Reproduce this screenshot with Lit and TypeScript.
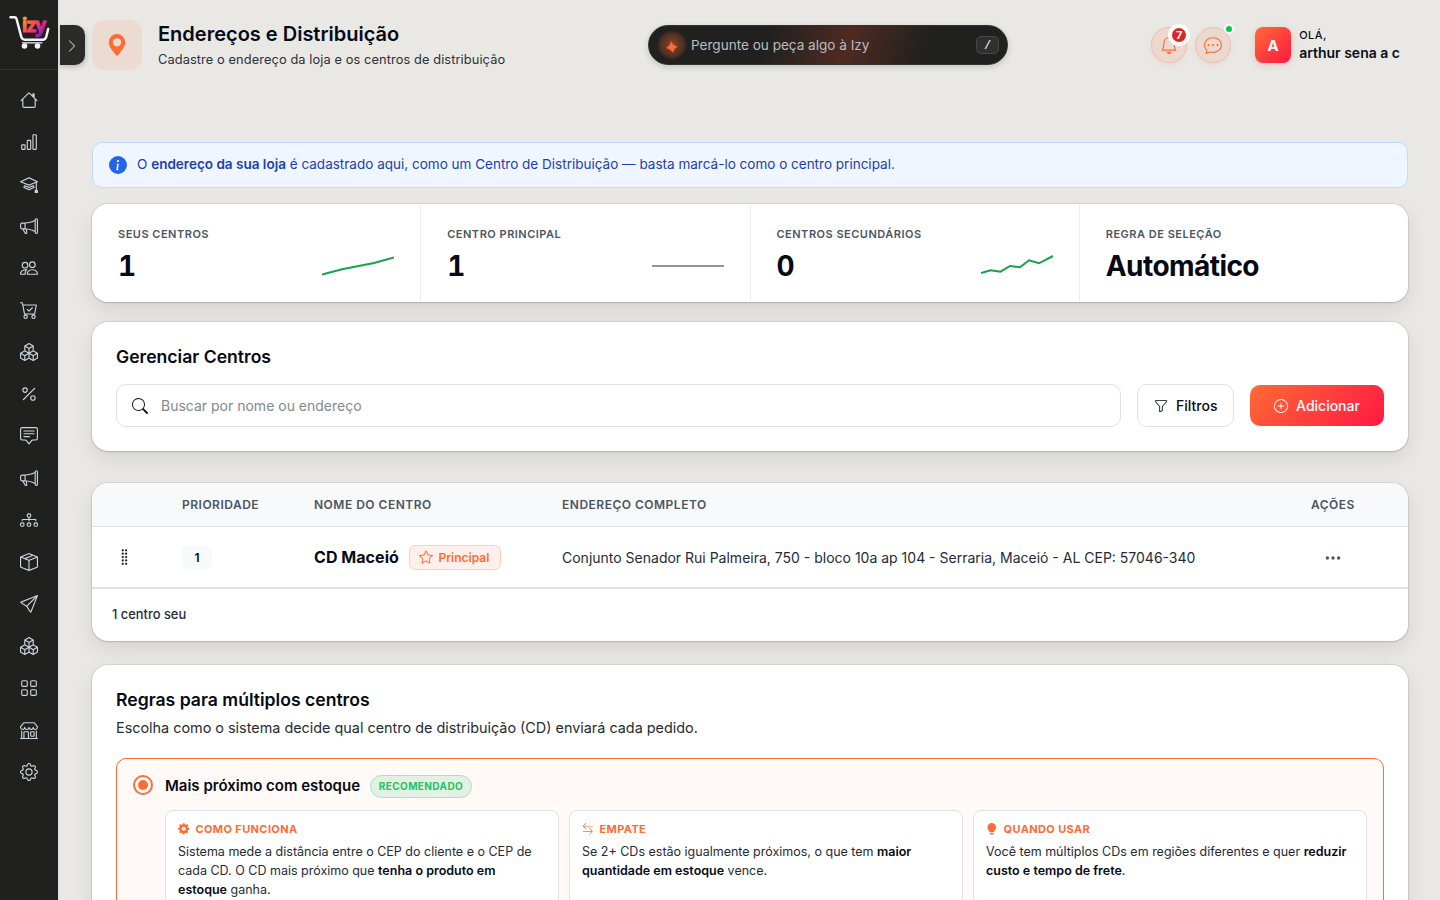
import { LitElement, html, svg, css } from "lit";
import { customElement, property } from "lit/decorators.js";

const ICONS: Record<string, string[]> = {
  house: ["M8.707 1.5a1 1 0 0 0-1.414 0L.646 8.146a.5.5 0 0 0 .708.708L2 8.207V13.5A1.5 1.5 0 0 0 3.5 15h9a1.5 1.5 0 0 0 1.5-1.5V8.207l.646.647a.5.5 0 0 0 .708-.708L13 5.793V2.5a.5.5 0 0 0-.5-.5h-1a.5.5 0 0 0-.5.5v1.293zM13 7.207V13.5a.5.5 0 0 1-.5.5h-9a.5.5 0 0 1-.5-.5V7.207l5-5z"],
  bars: ["M4 11H2v3h2zm5-4H7v7h2zm5-5v12h-2V2zm-2-1a1 1 0 0 0-1 1v12a1 1 0 0 0 1 1h2a1 1 0 0 0 1-1V2a1 1 0 0 0-1-1zM6 7a1 1 0 0 1 1-1h2a1 1 0 0 1 1 1v7a1 1 0 0 1-1 1H7a1 1 0 0 1-1-1zm-5 4a1 1 0 0 1 1-1h2a1 1 0 0 1 1 1v3a1 1 0 0 1-1 1H2a1 1 0 0 1-1-1z"],
  mortarboard: [
    "M8.211 2.047a.5.5 0 0 0-.422 0l-7.5 3.5a.5.5 0 0 0 .025.917l7.5 3a.5.5 0 0 0 .372 0L14 7.14V13a1 1 0 0 0-1 1v2h3v-2a1 1 0 0 0-1-1V6.739l.686-.275a.5.5 0 0 0 .025-.917zM8 8.46 1.758 5.965 8 3.052l6.242 2.913z",
    "M4.176 9.032a.5.5 0 0 0-.656.327l-.5 1.7a.5.5 0 0 0 .294.605l4.5 1.8a.5.5 0 0 0 .372 0l4.5-1.8a.5.5 0 0 0 .294-.605l-.5-1.7a.5.5 0 0 0-.656-.327L8 10.466zm-.068 1.873.22-.748 3.496 1.311a.5.5 0 0 0 .352 0l3.496-1.311.22.748L8 12.46z",
  ],
  megaphone: ["M13 2.5a1.5 1.5 0 0 1 3 0v11a1.5 1.5 0 0 1-3 0v-.214c-2.162-1.241-4.49-1.843-6.912-2.083l.405 2.712A1 1 0 0 1 5.51 15.1h-.548a1 1 0 0 1-.916-.599l-1.85-3.49-.202-.003A2.014 2.014 0 0 1 0 9V7a2.02 2.02 0 0 1 1.992-2.013 75 75 0 0 0 2.483-.075c3.043-.154 6.148-.849 8.525-2.199zm1 0v11a.5.5 0 0 0 1 0v-11a.5.5 0 0 0-1 0m-1 1.35c-2.344 1.205-5.209 1.842-8 2.033v4.233q.27.015.537.036c2.568.189 5.093.744 7.463 1.993zm-9 6.215v-4.13a95 95 0 0 1-1.992.052A1.02 1.02 0 0 0 1 7v2c0 .55.448 1.002 1.006 1.009A61 61 0 0 1 4 10.065m-.657.975 1.609 3.037.01.024h.548l-.002-.014-.443-2.966a68 68 0 0 0-1.722-.082z"],
  people: ["M15 14s1 0 1-1-1-4-5-4-5 3-5 4 1 1 1 1zm-7.978-1L7 12.996c.001-.264.167-1.03.76-1.72C8.312 10.629 9.282 10 11 10c1.717 0 2.687.63 3.24 1.276.593.69.758 1.457.76 1.72l-.008.002-.014.002zM11 7a2 2 0 1 0 0-4 2 2 0 0 0 0 4m3-2a3 3 0 1 1-6 0 3 3 0 0 1 6 0M6.936 9.28a6 6 0 0 0-1.23-.247A7 7 0 0 0 5 9c-4 0-5 3-5 4q0 1 1 1h4.216A2.24 2.24 0 0 1 5 13c0-1.01.377-2.042 1.09-2.904.243-.294.526-.569.846-.816M4.92 10A5.5 5.5 0 0 0 4 13H1c0-.26.164-1.03.76-1.724.545-.636 1.492-1.256 3.16-1.275ZM1.5 5.5a3 3 0 1 1 6 0 3 3 0 0 1-6 0m3-2a2 2 0 1 0 0 4 2 2 0 0 0 0-4"],
  cart: [
    "M11.354 6.354a.5.5 0 0 0-.708-.708L8 8.293 6.854 7.146a.5.5 0 1 0-.708.708l1.5 1.5a.5.5 0 0 0 .708 0z",
    "M.5 1a.5.5 0 0 0 0 1h1.11l.401 1.607 1.498 7.985A.5.5 0 0 0 4 12h1a2 2 0 1 0 0 4 2 2 0 0 0 0-4h7a2 2 0 1 0 0 4 2 2 0 0 0 0-4h1a.5.5 0 0 0 .491-.408l1.5-8A.5.5 0 0 0 14.5 3H2.89l-.405-1.621A.5.5 0 0 0 2 1zm3.915 10L3.102 4h10.796l-1.313 7zM6 14a1 1 0 1 1-2 0 1 1 0 0 1 2 0m7 0a1 1 0 1 1-2 0 1 1 0 0 1 2 0",
  ],
  boxes: ["M7.752.066a.5.5 0 0 1 .496 0l3.75 2.143a.5.5 0 0 1 .252.434v3.995l3.498 2A.5.5 0 0 1 16 9.07v4.286a.5.5 0 0 1-.252.434l-3.75 2.143a.5.5 0 0 1-.496 0l-3.502-2-3.502 2.001a.5.5 0 0 1-.496 0l-3.75-2.143A.5.5 0 0 1 0 13.357V9.071a.5.5 0 0 1 .252-.434L3.75 6.638V2.643a.5.5 0 0 1 .252-.434zM4.25 7.504 1.508 9.071l2.742 1.567 2.742-1.567zM7.5 9.933l-2.75 1.571v3.134l2.75-1.571zm1 3.134 2.75 1.571v-3.134L8.5 9.933zm.508-3.996 2.742 1.567 2.742-1.567-2.742-1.567zm2.242-2.433V3.504L8.5 5.076V8.21zM7.5 8.21V5.076L4.75 3.504v3.134zM5.258 2.643 8 4.21l2.742-1.567L8 1.076zM15 9.933l-2.75 1.571v3.134L15 13.067zM3.75 14.638v-3.134L1 9.933v3.134z"],
  percent: ["M13.442 2.558a.625.625 0 0 1 0 .884l-10 10a.625.625 0 1 1-.884-.884l10-10a.625.625 0 0 1 .884 0M4.5 6a1.5 1.5 0 1 1 0-3 1.5 1.5 0 0 1 0 3m0 1a2.5 2.5 0 1 0 0-5 2.5 2.5 0 0 0 0 5m7 6a1.5 1.5 0 1 1 0-3 1.5 1.5 0 0 1 0 3m0 1a2.5 2.5 0 1 0 0-5 2.5 2.5 0 0 0 0 5"],
  chatText: [
    "M14 1a1 1 0 0 1 1 1v8a1 1 0 0 1-1 1h-2.5a2 2 0 0 0-1.6.8L8 14.333 6.1 11.8a2 2 0 0 0-1.6-.8H2a1 1 0 0 1-1-1V2a1 1 0 0 1 1-1zM2 0a2 2 0 0 0-2 2v8a2 2 0 0 0 2 2h2.5a1 1 0 0 1 .8.4l1.9 2.533a1 1 0 0 0 1.6 0l1.9-2.533a1 1 0 0 1 .8-.4H14a2 2 0 0 0 2-2V2a2 2 0 0 0-2-2z",
    "M3 3.5a.5.5 0 0 1 .5-.5h9a.5.5 0 0 1 0 1h-9a.5.5 0 0 1-.5-.5M3 6a.5.5 0 0 1 .5-.5h9a.5.5 0 0 1 0 1h-9A.5.5 0 0 1 3 6m0 2.5a.5.5 0 0 1 .5-.5h5a.5.5 0 0 1 0 1h-5a.5.5 0 0 1-.5-.5",
  ],
  diagram: ["M6 3.5A1.5 1.5 0 0 1 7.5 2h1A1.5 1.5 0 0 1 10 3.5v1A1.5 1.5 0 0 1 8.5 6v1H14a.5.5 0 0 1 .5.5v1a.5.5 0 0 1-1 0V8h-5v.5a.5.5 0 0 1-1 0V8h-5v.5a.5.5 0 0 1-1 0v-1A.5.5 0 0 1 2 7h5.5V6A1.5 1.5 0 0 1 6 4.5zM8.5 5a.5.5 0 0 0 .5-.5v-1a.5.5 0 0 0-.5-.5h-1a.5.5 0 0 0-.5.5v1a.5.5 0 0 0 .5.5zM0 11.5A1.5 1.5 0 0 1 1.5 10h1A1.5 1.5 0 0 1 4 11.5v1A1.5 1.5 0 0 1 2.5 14h-1A1.5 1.5 0 0 1 0 12.5zm1.5-.5a.5.5 0 0 0-.5.5v1a.5.5 0 0 0 .5.5h1a.5.5 0 0 0 .5-.5v-1a.5.5 0 0 0-.5-.5zm4.5.5A1.5 1.5 0 0 1 7.5 10h1a1.5 1.5 0 0 1 1.5 1.5v1A1.5 1.5 0 0 1 8.5 14h-1A1.5 1.5 0 0 1 6 12.5zm1.5-.5a.5.5 0 0 0-.5.5v1a.5.5 0 0 0 .5.5h1a.5.5 0 0 0 .5-.5v-1a.5.5 0 0 0-.5-.5zm4.5.5a1.5 1.5 0 0 1 1.5-1.5h1a1.5 1.5 0 0 1 1.5 1.5v1a1.5 1.5 0 0 1-1.5 1.5h-1a1.5 1.5 0 0 1-1.5-1.5zm1.5-.5a.5.5 0 0 0-.5.5v1a.5.5 0 0 0 .5.5h1a.5.5 0 0 0 .5-.5v-1a.5.5 0 0 0-.5-.5z"],
  box: ["M8.186 1.113a.5.5 0 0 0-.372 0L1.846 3.5l2.404.961L10.404 2zm3.564 1.426L5.596 5 8 5.961 14.154 3.5zm3.25 1.7-6.5 2.6v7.922l6.5-2.6V4.24zM7.5 14.762V6.838L1 4.239v7.923zM7.443.184a1.5 1.5 0 0 1 1.114 0l7.129 2.852A.5.5 0 0 1 16 3.5v8.662a1 1 0 0 1-.629.928l-7.185 2.874a.5.5 0 0 1-.372 0L.63 13.09a1 1 0 0 1-.63-.928V3.5a.5.5 0 0 1 .314-.464z"],
  send: ["M15.854.146a.5.5 0 0 1 .11.54l-5.819 14.547a.75.75 0 0 1-1.329.124l-3.178-4.995L.643 7.184a.75.75 0 0 1 .124-1.33L15.314.037a.5.5 0 0 1 .54.11ZM6.636 10.07l2.761 4.338L14.13 2.576zm6.787-8.201L1.591 6.602l4.339 2.76z"],
  grid: ["M1 2.5A1.5 1.5 0 0 1 2.5 1h3A1.5 1.5 0 0 1 7 2.5v3A1.5 1.5 0 0 1 5.5 7h-3A1.5 1.5 0 0 1 1 5.5zM2.5 2a.5.5 0 0 0-.5.5v3a.5.5 0 0 0 .5.5h3a.5.5 0 0 0 .5-.5v-3a.5.5 0 0 0-.5-.5zm6.5.5A1.5 1.5 0 0 1 10.5 1h3A1.5 1.5 0 0 1 15 2.5v3A1.5 1.5 0 0 1 13.5 7h-3A1.5 1.5 0 0 1 9 5.5zm1.5-.5a.5.5 0 0 0-.5.5v3a.5.5 0 0 0 .5.5h3a.5.5 0 0 0 .5-.5v-3a.5.5 0 0 0-.5-.5zM1 10.5A1.5 1.5 0 0 1 2.5 9h3A1.5 1.5 0 0 1 7 10.5v3A1.5 1.5 0 0 1 5.5 15h-3A1.5 1.5 0 0 1 1 13.5zm1.5-.5a.5.5 0 0 0-.5.5v3a.5.5 0 0 0 .5.5h3a.5.5 0 0 0 .5-.5v-3a.5.5 0 0 0-.5-.5zm6.5.5A1.5 1.5 0 0 1 10.5 9h3a1.5 1.5 0 0 1 1.5 1.5v3a1.5 1.5 0 0 1-1.5 1.5h-3A1.5 1.5 0 0 1 9 13.5zm1.5-.5a.5.5 0 0 0-.5.5v3a.5.5 0 0 0 .5.5h3a.5.5 0 0 0 .5-.5v-3a.5.5 0 0 0-.5-.5z"],
  shop: ["M2.97 1.35A1 1 0 0 1 3.73 1h8.54a1 1 0 0 1 .76.35l2.609 3.044A1.5 1.5 0 0 1 16 5.37v.255a2.375 2.375 0 0 1-4.25 1.458A2.37 2.37 0 0 1 9.875 8 2.37 2.37 0 0 1 8 7.083 2.37 2.37 0 0 1 6.125 8a2.37 2.37 0 0 1-1.875-.917A2.375 2.375 0 0 1 0 5.625V5.37a1.5 1.5 0 0 1 .361-.976zm1.78 4.275a1.375 1.375 0 0 0 2.75 0 .5.5 0 0 1 1 0 1.375 1.375 0 0 0 2.75 0 .5.5 0 0 1 1 0 1.375 1.375 0 1 0 2.75 0V5.37a.5.5 0 0 0-.12-.325L12.27 2H3.73L1.12 5.045A.5.5 0 0 0 1 5.37v.255a1.375 1.375 0 0 0 2.75 0 .5.5 0 0 1 1 0M1.5 8.5A.5.5 0 0 1 2 9v6h1v-5a1 1 0 0 1 1-1h3a1 1 0 0 1 1 1v5h6V9a.5.5 0 0 1 1 0v6h.5a.5.5 0 0 1 0 1H.5a.5.5 0 0 1 0-1H1V9a.5.5 0 0 1 .5-.5M4 15h3v-5H4zm5-5a1 1 0 0 1 1-1h2a1 1 0 0 1 1 1v3a1 1 0 0 1-1 1h-2a1 1 0 0 1-1-1zm3 0h-2v3h2z"],
  gear: [
    "M8 4.754a3.246 3.246 0 1 0 0 6.492 3.246 3.246 0 0 0 0-6.492M5.754 8a2.246 2.246 0 1 1 4.492 0 2.246 2.246 0 0 1-4.492 0",
    "M9.796 1.343c-.527-1.79-3.065-1.79-3.592 0l-.094.319a.873.873 0 0 1-1.255.52l-.292-.16c-1.64-.892-3.433.902-2.54 2.541l.159.292a.873.873 0 0 1-.52 1.255l-.319.094c-1.79.527-1.79 3.065 0 3.592l.319.094a.873.873 0 0 1 .52 1.255l-.16.292c-.892 1.64.901 3.434 2.541 2.54l.292-.159a.873.873 0 0 1 1.255.52l.094.319c.527 1.79 3.065 1.79 3.592 0l.094-.319a.873.873 0 0 1 1.255-.52l.292.16c1.64.893 3.434-.902 2.54-2.541l-.159-.292a.873.873 0 0 1 .52-1.255l.319-.094c1.79-.527 1.79-3.065 0-3.592l-.319-.094a.873.873 0 0 1-.52-1.255l.16-.292c.893-1.64-.902-3.433-2.541-2.54l-.292.159a.873.873 0 0 1-1.255-.52zm-2.633.283c.246-.835 1.428-.835 1.674 0l.094.319a1.873 1.873 0 0 0 2.693 1.115l.291-.16c.764-.415 1.6.42 1.184 1.185l-.159.292a1.873 1.873 0 0 0 1.116 2.692l.318.094c.835.246.835 1.428 0 1.674l-.319.094a1.873 1.873 0 0 0-1.115 2.693l.16.291c.415.764-.42 1.6-1.185 1.184l-.291-.159a1.873 1.873 0 0 0-2.693 1.116l-.094.318c-.246.835-1.428.835-1.674 0l-.094-.319a1.873 1.873 0 0 0-2.692-1.115l-.292.16c-.764.415-1.6-.42-1.184-1.185l.159-.291A1.873 1.873 0 0 0 1.945 8.93l-.319-.094c-.835-.246-.835-1.428 0-1.674l.319-.094A1.873 1.873 0 0 0 3.06 4.377l-.16-.292c-.415-.764.42-1.6 1.185-1.184l.292.159a1.873 1.873 0 0 0 2.692-1.115z",
  ],
  gearFill: ["M9.405 1.05c-.413-1.4-2.397-1.4-2.81 0l-.1.34a1.464 1.464 0 0 1-2.105.872l-.31-.17c-1.283-.698-2.686.705-1.987 1.987l.169.311c.446.82.023 1.841-.872 2.105l-.34.1c-1.4.413-1.4 2.397 0 2.81l.34.1a1.464 1.464 0 0 1 .872 2.105l-.17.31c-.698 1.283.705 2.686 1.987 1.987l.311-.169a1.464 1.464 0 0 1 2.105.872l.1.34c.413 1.4 2.397 1.4 2.81 0l.1-.34a1.464 1.464 0 0 1 2.105-.872l.31.17c1.283.698 2.686-.705 1.987-1.987l-.169-.311a1.464 1.464 0 0 1 .872-2.105l.34-.1c1.4-.413 1.4-2.397 0-2.81l-.34-.1a1.464 1.464 0 0 1-.872-2.105l.17-.31c.698-1.283-.705-2.686-1.987-1.987l-.311.169a1.464 1.464 0 0 1-2.105-.872zM8 10.93a2.929 2.929 0 1 1 0-5.86 2.929 2.929 0 0 1 0 5.858z"],
  bell: ["M8 16a2 2 0 0 0 2-2H6a2 2 0 0 0 2 2M8 1.918l-.797.161A4 4 0 0 0 4 6c0 .628-.134 2.197-.459 3.742-.16.767-.376 1.566-.663 2.258h10.244c-.287-.692-.502-1.49-.663-2.258C12.134 8.197 12 6.628 12 6a4 4 0 0 0-3.203-3.92zM14.22 12c.223.447.481.801.78 1H1c.299-.199.557-.553.78-1C2.68 10.2 3 6.88 3 6c0-2.42 1.72-4.44 4.005-4.901a1 1 0 1 1 1.99 0A5 5 0 0 1 13 6c0 .88.32 4.2 1.22 6"],
  chatDots: [
    "M5 8a1 1 0 1 1-2 0 1 1 0 0 1 2 0m4 0a1 1 0 1 1-2 0 1 1 0 0 1 2 0m3 1a1 1 0 1 0 0-2 1 1 0 0 0 0 2",
    "m2.165 15.803.02-.004c1.83-.363 2.948-.842 3.468-1.105A9 9 0 0 0 8 15c4.418 0 8-3.134 8-7s-3.582-7-8-7-8 3.134-8 7c0 1.76.743 3.37 1.97 4.6a10.4 10.4 0 0 1-.524 2.318l-.003.011a11 11 0 0 1-.244.637c-.079.186.074.394.273.362a22 22 0 0 0 .693-.125m.8-3.108a1 1 0 0 0-.287-.801C1.618 10.83 1 9.468 1 8c0-3.192 3.004-6 7-6s7 2.808 7 6-3.004 6-7 6a8 8 0 0 1-2.088-.272 1 1 0 0 0-.711.074c-.387.196-1.24.57-2.634.893a11 11 0 0 0 .398-2",
  ],
  chevron: ["M4.646 1.646a.5.5 0 0 1 .708 0l6 6a.5.5 0 0 1 0 .708l-6 6a.5.5 0 0 1-.708-.708L10.293 8 4.646 2.354a.5.5 0 0 1 0-.708"],
  pin: ["M8 16s6-5.686 6-10A6 6 0 0 0 2 6c0 4.314 6 10 6 10m0-7a3 3 0 1 1 0-6 3 3 0 0 1 0 6"],
  search: ["M11.742 10.344a6.5 6.5 0 1 0-1.397 1.398h-.001q.044.06.098.115l3.85 3.85a1 1 0 0 0 1.415-1.414l-3.85-3.85a1 1 0 0 0-.115-.1zM12 6.5a5.5 5.5 0 1 1-11 0 5.5 5.5 0 0 1 11 0"],
  funnel: ["M1.5 1.5A.5.5 0 0 1 2 1h12a.5.5 0 0 1 .5.5v2a.5.5 0 0 1-.128.334L10 8.692V13.5a.5.5 0 0 1-.342.474l-3 1A.5.5 0 0 1 6 14.5V8.692L1.628 3.834A.5.5 0 0 1 1.5 3.5zm1 .5v1.308l4.372 4.858A.5.5 0 0 1 7 8.5v5.306l2-.666V8.5a.5.5 0 0 1 .128-.334L13.5 3.308V2z"],
  plus: [
    "M8 15A7 7 0 1 1 8 1a7 7 0 0 1 0 14m0 1A8 8 0 1 0 8 0a8 8 0 0 0 0 16",
    "M8 4a.5.5 0 0 1 .5.5v3h3a.5.5 0 0 1 0 1h-3v3a.5.5 0 0 1-1 0v-3h-3a.5.5 0 0 1 0-1h3v-3A.5.5 0 0 1 8 4",
  ],
  star: ["M2.866 14.85c-.078.444.36.791.746.593l4.39-2.256 4.389 2.256c.386.198.824-.149.746-.592l-.83-4.73 3.522-3.356c.33-.314.16-.888-.282-.95l-4.898-.696L8.465.792a.513.513 0 0 0-.927 0L5.354 5.12l-4.898.696c-.441.062-.612.636-.283.95l3.523 3.356-.83 4.73zm4.905-2.767-3.686 1.894.694-3.957a.56.56 0 0 0-.163-.505L1.71 6.745l4.052-.576a.53.53 0 0 0 .393-.288L8 2.223l1.847 3.658a.53.53 0 0 0 .393.288l4.052.575-2.906 2.77a.56.56 0 0 0-.163.506l.694 3.957-3.686-1.894a.5.5 0 0 0-.461 0z"],
  dots: ["M3 9.5a1.5 1.5 0 1 1 0-3 1.5 1.5 0 0 1 0 3m5 0a1.5 1.5 0 1 1 0-3 1.5 1.5 0 0 1 0 3m5 0a1.5 1.5 0 1 1 0-3 1.5 1.5 0 0 1 0 3"],
  grip: ["M7 2a1 1 0 1 1-2 0 1 1 0 0 1 2 0m3 0a1 1 0 1 1-2 0 1 1 0 0 1 2 0M7 5a1 1 0 1 1-2 0 1 1 0 0 1 2 0m3 0a1 1 0 1 1-2 0 1 1 0 0 1 2 0M7 8a1 1 0 1 1-2 0 1 1 0 0 1 2 0m3 0a1 1 0 1 1-2 0 1 1 0 0 1 2 0m-3 3a1 1 0 1 1-2 0 1 1 0 0 1 2 0m3 0a1 1 0 1 1-2 0 1 1 0 0 1 2 0m-3 3a1 1 0 1 1-2 0 1 1 0 0 1 2 0m3 0a1 1 0 1 1-2 0 1 1 0 0 1 2 0"],
  info: ["M8 16A8 8 0 1 0 8 0a8 8 0 0 0 0 16m.93-9.412-1 4.705c-.07.34.029.533.304.533.194 0 .487-.07.686-.246l-.088.416c-.287.346-.92.598-1.465.598-.703 0-1.002-.422-.808-1.319l.738-3.468c.064-.293.006-.399-.287-.47l-.451-.081.082-.381 2.29-.287zM8 5.5a1 1 0 1 1 0-2 1 1 0 0 1 0 2"],
  swap: ["M1 11.5a.5.5 0 0 0 .5.5h11.793l-3.147 3.146a.5.5 0 0 0 .708.708l4-4a.5.5 0 0 0 0-.708l-4-4a.5.5 0 0 0-.708.708L13.293 11H1.5a.5.5 0 0 0-.5.5m14-7a.5.5 0 0 1-.5.5H2.707l3.147 3.146a.5.5 0 1 1-.708.708l-4-4a.5.5 0 0 1 0-.708l4-4a.5.5 0 1 1 .708.708L2.707 4H14.5a.5.5 0 0 1 .5.5"],
  bulb: ["M2 6a6 6 0 1 1 10.174 4.31c-.203.196-.359.4-.453.619l-.762 1.769A.5.5 0 0 1 10.5 13h-5a.5.5 0 0 1-.46-.302l-.761-1.77a2 2 0 0 0-.453-.618A5.98 5.98 0 0 1 2 6m3 8.5a.5.5 0 0 1 .5-.5h5a.5.5 0 0 1 0 1l-.224.447a1 1 0 0 1-.894.553H6.618a1 1 0 0 1-.894-.553L5.5 15a.5.5 0 0 1-.5-.5"],
};

@customElement("izy-icon")
class IzyIcon extends LitElement {
  @property() name = "";
  static styles = css`
    :host { display: block; flex: none; width: 16px; height: 16px; }
    .glyph { display: block; width: 100%; height: 100%; fill: currentColor; }
  `;
  render() {
    return html`<svg class="glyph" viewBox="0 0 16 16">${(ICONS[this.name] ?? []).map((d) => svg`<path d=${d}></path>`)}</svg>`;
  }
}

@customElement("izy-sidebar")
class IzySidebar extends LitElement {
  static styles = css`
    :host { display: flex; flex-direction: column; flex: none; box-sizing: border-box; width: 60px; height: 900px;
      background: #20201e; border-right: 2px solid #dee2e6; }
    .brand { height: 69px; box-sizing: content-box; border-bottom: 1px solid #333331; }
    .logo { display: block; width: 58px; height: 69px; }
    .word { font: 700 19.5px "Open Sans", sans-serif; letter-spacing: -1px; }
    .nav { display: flex; flex-direction: column; align-items: center; gap: 24px; padding-top: 21px; color: #cbd5e1; }
    .item { width: 18px; height: 18px; }
  `;
  render() {
    const items = ["house", "bars", "mortarboard", "megaphone", "people", "cart", "boxes", "percent", "chatText",
      "megaphone", "diagram", "box", "send", "boxes", "grid", "shop", "gear"];
    return html`
      <div class="brand">
        <svg class="logo" viewBox="0 0 58 69">
          <defs>
            <linearGradient id="w" gradientUnits="userSpaceOnUse" x1="24" y1="19" x2="43" y2="37">
              <stop offset="0" stop-color="#ffa01f"></stop><stop offset=".3" stop-color="#ff5a3c"></stop>
              <stop offset=".6" stop-color="#ee2a88"></stop><stop offset=".95" stop-color="#6a1be0"></stop>
            </linearGradient>
          </defs>
          <path d="M10.5 17.2H14.5Q16 17.2 16.5 18.8L21.2 36.5Q22 39.7 24.8 39.7H42.5Q45.5 39.7 46.2 37L48.2 29" fill="none" stroke="#f3f4fa" stroke-width="2.5" stroke-linecap="round" stroke-linejoin="round"></path>
          <path d="M22.5 42.8H42" fill="none" stroke="#f3f4fa" stroke-width="1.2" stroke-linecap="round"></path>
          <circle cx="24.5" cy="46" r="2.8" fill="#f3f4fa"></circle><circle cx="37.5" cy="46" r="2.8" fill="#f3f4fa"></circle>
          <text class="word" x="21.8" y="32.2" fill="url(#w)" stroke="url(#w)" stroke-width=".8">izy</text>
        </svg>
      </div>
      <div class="nav">${items.map((n) => html`<izy-icon class="item" name=${n}></izy-icon>`)}</div>`;
  }
}

@customElement("izy-header")
class IzyHeader extends LitElement {
  static styles = css`
    :host { display: grid; grid-template-columns: 556px 360px 1fr; align-items: center; height: 50px; }
    .lead { display: flex; align-items: center; gap: 16px; }
    .tile { display: grid; place-items: center; width: 50px; height: 50px; border-radius: 12px; background: #ecdbd1; color: #ff6b35; }
    .tile-icon { width: 22px; height: 22px; }
    .title { font-size: 20px; font-weight: 600; line-height: 24px; color: #060a14; white-space: nowrap; margin-top: 2px; }
    .sub { font-size: 12.8px; line-height: 20px; color: #2b303b; margin: 4px 0 0; white-space: nowrap; letter-spacing: .1px; }
    .ask { display: flex; align-items: center; box-sizing: border-box; width: 360px; height: 40px; border-radius: 20px; padding: 0 8px;
      border: 1px solid #2c352f;
      background: linear-gradient(110deg, #20201e 33%, #4f2b21 55%, #20201e 77%); box-shadow: 0 2px 6px rgba(0,0,0,.16); }
    .glow { display: grid; place-items: center; width: 30px; height: 30px; border-radius: 50%;
      background: radial-gradient(circle, rgba(255,107,53,.5) 0%, rgba(255,107,53,.2) 55%, transparent 72%); }
    .spark { width: 12px; height: 12px; fill: #ff6b35; margin: 4px 1px 0 0; }
    .hint { flex: 1; margin-left: 4px; font-size: 13.55px; color: #b9bdc4; margin-top: -1px; }
    .key { display: grid; place-items: center; box-sizing: border-box; width: 23px; height: 18px; border-radius: 5px; background: #30302f; border: 1px solid #484846;
      color: #d8dbe0; font: 700 12px/16px "Liberation Mono", monospace; padding-top: 1px; }
    .tools { display: flex; justify-content: flex-end; align-items: center; padding-right: 8px; }
    .round { position: relative; display: grid; place-items: center; box-sizing: border-box; width: 36px; height: 36px; border-radius: 50%; color: #ff6b35;
      background: #ebd9cf; border: 1px solid #f0bfaa; margin-right: 8px; box-shadow: 0 2px 5px rgba(255,107,53,.12); }
    .round-icon { width: 18px; height: 18px; }
    .count { position: absolute; left: 16px; top: -4px; width: 14px; height: 14px; border: 4px solid #fff; border-radius: 50%;
      background: #dc2626; color: #fff; font-size: 11px; line-height: 14px; font-weight: 700; text-align: center; }
    .dot { position: absolute; left: 28px; top: -4px; width: 6px; height: 6px; border: 2px solid #fff; border-radius: 50%; background: #00c853; }
    .avatar { display: grid; place-items: center; width: 36px; height: 36px; border-radius: 8px; margin: 0 8px 0 16px; color: #fff; font-size: 15px; font-weight: 700;
      background: linear-gradient(135deg, #ff6b35, #ff1744); box-shadow: 0 2px 6px rgba(255,80,60,.25); }
    .hello { font-size: 11px; font-weight: 500; line-height: 14px; color: #0a0e18; letter-spacing: .5px; }
    .who { font-size: 14px; font-weight: 600; line-height: 20px; color: #0a0e18; white-space: nowrap; margin: 1px 0 -1px; }
  `;
  render() {
    return html`
      <div class="lead">
        <div class="tile"><izy-icon class="tile-icon" name="pin"></izy-icon></div>
        <div><div class="title">Endereços e Distribuição</div><div class="sub">Cadastre o endereço da loja e os centros de distribuição</div></div>
      </div>
      <div class="ask">
        <div class="glow"><svg class="spark" viewBox="0 0 12 12"><path d="M5 0Q6.8 4.5 12 5.8Q7.8 7.4 7.2 12Q5 8.4 0 7Q4.4 5 5 0Z"></path></svg></div>
        <div class="hint">Pergunte ou peça algo à Izy</div>
        <div class="key">/</div>
      </div>
      <div class="tools">
        <div class="round"><izy-icon class="round-icon" name="bell"></izy-icon><div class="count">7</div></div>
        <div class="round"><izy-icon class="round-icon" name="chatDots"></izy-icon><div class="dot"></div></div>
        <div class="avatar">A</div>
        <div><div class="hello">OLÁ,</div><div class="who">arthur sena a c</div></div>
      </div>`;
  }
}

@customElement("app-root")
class AppRoot extends LitElement {
  static styles = css`
    :host { display: flex; width: 1440px; height: 900px; overflow: hidden; background: #e9e8e4; font-family: Inter, sans-serif; color: #060a14; }
    .toggle { position: absolute; left: 60px; top: 25px; display: grid; place-items: center; width: 25px; height: 40px; border-radius: 0 10px 10px 0; background: #2b2b2a; color: #d2d6dc;
      box-shadow: 1px 2px 5px rgba(0,0,0,.2); }
    .toggle-icon { width: 14px; height: 14px; margin: 2px 1px 0 0; }
    .page { flex: 1; min-width: 0; padding: 20px 32px 0; }
    .notice { display: flex; align-items: center; gap: 10px; box-sizing: border-box; height: 46px; margin-top: 72px; padding: 0 16px; border: 1px solid #bfdbfe; border-radius: 10px;
      background: #eff6ff; color: #1e40af; font-size: 13.52px; }
    .notice-icon { width: 18px; height: 18px; color: #2563eb; }
    .notice-text { margin-top: -2px; }
    .strong { font-weight: 600; }
    .card { background: #fff; border-radius: 16px; box-shadow: 0 0 0 1px rgba(0,0,0,.07), 0 1px 2px rgba(0,0,0,.12), 0 8px 20px rgba(0,0,0,.09); }
    .stats { display: grid; grid-template-columns: repeat(4, 1fr); gap: 1px; height: 98px; margin-top: 16px; overflow: hidden; background: #eceef0; }
    .stat { display: grid; grid-template-columns: 1fr auto; align-content: start; box-sizing: border-box; padding: 23px 26px 0; background: #fff; }
    .label { grid-column: 1 / 3; font-size: 11px; font-weight: 600; letter-spacing: .5px; line-height: 14px; color: #4b5563; }
    .value { font-size: 28px; font-weight: 700; line-height: 34px; margin-top: 8px; letter-spacing: -.56px; font-variant-numeric: tabular-nums; }
    .line { display: block; width: 72px; height: 24px; margin-top: 13px; fill: none; stroke-width: 2; }
    .manage { height: 129px; margin-top: 20px; padding: 24px; box-sizing: border-box; }
    .h2 { font-size: 17.6px; font-weight: 600; line-height: 22px; }
    .controls { display: flex; align-items: center; gap: 16px; margin-top: 16px; }
    .search { flex: 1; display: flex; align-items: center; gap: 13px; box-sizing: border-box; height: 43px; border: 1px solid #dee2e6; border-radius: 10px; padding: 0 15px; color: #14181f; font-size: 14px; }
    .placeholder { color: #84888f; }
    .filter { display: flex; align-items: center; gap: 8px; box-sizing: border-box; width: 97px; height: 43px; border: 1px solid #dee2e6; border-radius: 10px; padding: 0 16px; font-size: 14px; font-weight: 500; }
    .filter-icon { width: 14px; height: 14px; }
    .add { display: flex; align-items: center; justify-content: center; gap: 8px; width: 134px; height: 41px; border-radius: 10px; color: #fff; font-size: 14px; font-weight: 500; background: linear-gradient(135deg, #ff6b35, #ff1744); }
    .add-icon { width: 14px; height: 14px; }
    .table { height: 158px; margin-top: 32px; overflow: hidden; }
    .row { display: grid; grid-template-columns: 70px 132px 248px 1fr 83px; align-items: center; box-sizing: border-box; padding: 0 14px 0 20px; }
    .thead { height: 44px; background: #f8f9fb; border-bottom: 1px solid #dee2e6; color: #4b5563; font-size: 12px; font-weight: 600; letter-spacing: .5px; }
    .tbody { height: 62px; border-bottom: 2px solid #dee2e6; }
    .grip { width: 18px; height: 18px; margin-left: 4px; color: #1b202a; }
    .prio { display: grid; place-items: center; width: 30px; height: 23px; border-radius: 6px; background: #f8f9fb; font-size: 12px; font-weight: 600; }
    .name { display: flex; align-items: center; gap: 10px; font-size: 16px; white-space: nowrap; }
    .name-text { font-weight: 700; letter-spacing: .05px; }
    .tag { display: flex; align-items: center; gap: 5px; box-sizing: border-box; width: 92px; height: 25px; border: 1px solid #ffcfbd; border-radius: 6px; padding: 0 9.5px; background: #fff0eb; color: #ff6b35; font-size: 12px; font-weight: 600; }
    .tag-icon { width: 14px; height: 14px; }
    .addr { font-size: 14px; color: #262b35; white-space: nowrap; }
    .more { width: 18px; height: 18px; margin: 1px 0 0 13px; color: #4b5563; }
    .tfoot { padding: 16px 20px; line-height: 20px; font-size: 12.9px; font-weight: 500; color: #262b35; }
    .rules { margin-top: 24px; padding: 24px; height: 300px; }
    .lede { margin-top: 6px; font-size: 14.4px; line-height: 22px; color: #262b35; }
    .option { margin-top: 19px; box-sizing: border-box; height: 190px; border: 1px solid #ff6b35; border-radius: 10px; padding: 16px; background: #fff9f7; }
    .head { display: flex; align-items: center; height: 23px; }
    .radio { display: grid; place-items: center; box-sizing: border-box; width: 20px; height: 20px; border: 2px solid #ff6b35; border-radius: 50%; margin-top: -3px; background: #fff; }
    .knob { width: 10px; height: 10px; border-radius: 50%; background: #ff6b35; }
    .opt-title { margin: -2px 0 0 12px; width: 195px; font-size: 15px; font-weight: 600; white-space: nowrap; }
    .rec { display: grid; place-items: center; box-sizing: border-box; width: 102px; height: 23px; margin-left: 10px; padding-bottom: 1px; border: 1px solid #a7e3bd; border-radius: 12px; background: #e2f1e3; color: #22c55e; font-size: 10px; font-weight: 700; letter-spacing: .4px; }
    .trio { display: grid; grid-template-columns: repeat(3, 1fr); gap: 10px; margin: 12px 0 0 32px; }
    .cell { box-sizing: border-box; height: 120px; border: 1px solid #dee2e6; border-radius: 8px; padding: 10px 12px; background: #fff; }
    .cell-head { display: flex; align-items: center; gap: 6px; height: 16px; color: #ff6b35; font-size: 11px; font-weight: 700; letter-spacing: .38px; }
    .cell-icon { width: 11.5px; height: 11.5px; }
    .cell-text { margin-top: 5px; font-size: 12.5px; line-height: 19px; color: #262b35; }
    .cell-strong { font-weight: 600; color: #060a14; }
  `;

  private stat(label: string, value: string, points = "", color = "") {
    return html`<div class="stat">
      <div class="label">${label}</div><div class="value">${value}</div>
      ${points ? html`<svg class="line" viewBox="0 0 72 24" stroke=${color}><polyline points=${points}></polyline></svg>` : null}
    </div>`;
  }

  private cell(icon: string, title: string, body: unknown) {
    return html`<div class="cell">
      <div class="cell-head"><izy-icon class="cell-icon" name=${icon}></izy-icon>${title}</div>
      <div class="cell-text">${body}</div>
    </div>`;
  }

  render() {
    return html`
      <izy-sidebar></izy-sidebar>
      <div class="toggle"><izy-icon class="toggle-icon" name="chevron"></izy-icon></div>
      <main class="page">
        <izy-header></izy-header>
        <div class="notice">
          <izy-icon class="notice-icon" name="info"></izy-icon>
          <div class="notice-text">O <span class="strong">endereço da sua loja</span> é cadastrado aqui, como um Centro de Distribuição — basta marcá-lo como o centro principal.</div>
        </div>
        <section class="card stats">
          ${this.stat("SEUS CENTROS", "1", "0,20.5 20,15.2 52,9 72,3.5", "#16a34a")}
          ${this.stat("CENTRO PRINCIPAL", "1", "0,12 72,12", "#8f959e")}
          ${this.stat("CENTROS SECUNDÁRIOS", "0", "0,19 9.5,16.3 19.5,17.7 29,12 39,13.3 48,6.3 58,9.3 72,2", "#16a34a")}
          ${this.stat("REGRA DE SELEÇÃO", "Automático")}
        </section>
        <section class="card manage">
          <div class="h2">Gerenciar Centros</div>
          <div class="controls">
            <div class="search"><izy-icon name="search"></izy-icon><span class="placeholder">Buscar por nome ou endereço</span></div>
            <div class="filter"><izy-icon class="filter-icon" name="funnel"></izy-icon>Filtros</div>
            <div class="add"><izy-icon class="add-icon" name="plus"></izy-icon>Adicionar</div>
          </div>
        </section>
        <section class="card table">
          <div class="row thead"><span></span><span>PRIORIDADE</span><span>NOME DO CENTRO</span><span>ENDEREÇO COMPLETO</span><span>AÇÕES</span></div>
          <div class="row tbody">
            <izy-icon class="grip" name="grip"></izy-icon>
            <div class="prio">1</div>
            <div class="name"><span class="name-text">CD Maceió</span><div class="tag"><izy-icon class="tag-icon" name="star"></izy-icon>Principal</div></div>
            <div class="addr">Conjunto Senador Rui Palmeira, 750 - bloco 10a ap 104 - Serraria, Maceió - AL CEP: 57046-340</div>
            <izy-icon class="more" name="dots"></izy-icon>
          </div>
          <div class="tfoot">1 centro seu</div>
        </section>
        <section class="card rules">
          <div class="h2">Regras para múltiplos centros</div>
          <div class="lede">Escolha como o sistema decide qual centro de distribuição (CD) enviará cada pedido.</div>
          <div class="option">
            <div class="head"><div class="radio"><div class="knob"></div></div><div class="opt-title">Mais próximo com estoque</div><div class="rec">RECOMENDADO</div></div>
            <div class="trio">
              ${this.cell("gearFill", "COMO FUNCIONA", html`Sistema mede a distância entre o CEP do cliente e o CEP de cada CD. O CD mais próximo que <span class="cell-strong">tenha o produto em estoque</span> ganha.`)}
              ${this.cell("swap", "EMPATE", html`Se 2+ CDs estão igualmente próximos, o que tem <span class="cell-strong">maior quantidade em estoque</span> vence.`)}
              ${this.cell("bulb", "QUANDO USAR", html`Você tem múltiplos CDs em regiões diferentes e quer <span class="cell-strong">reduzir custo e tempo de frete</span>.`)}
            </div>
          </div>
        </section>
      </main>`;
  }
}
